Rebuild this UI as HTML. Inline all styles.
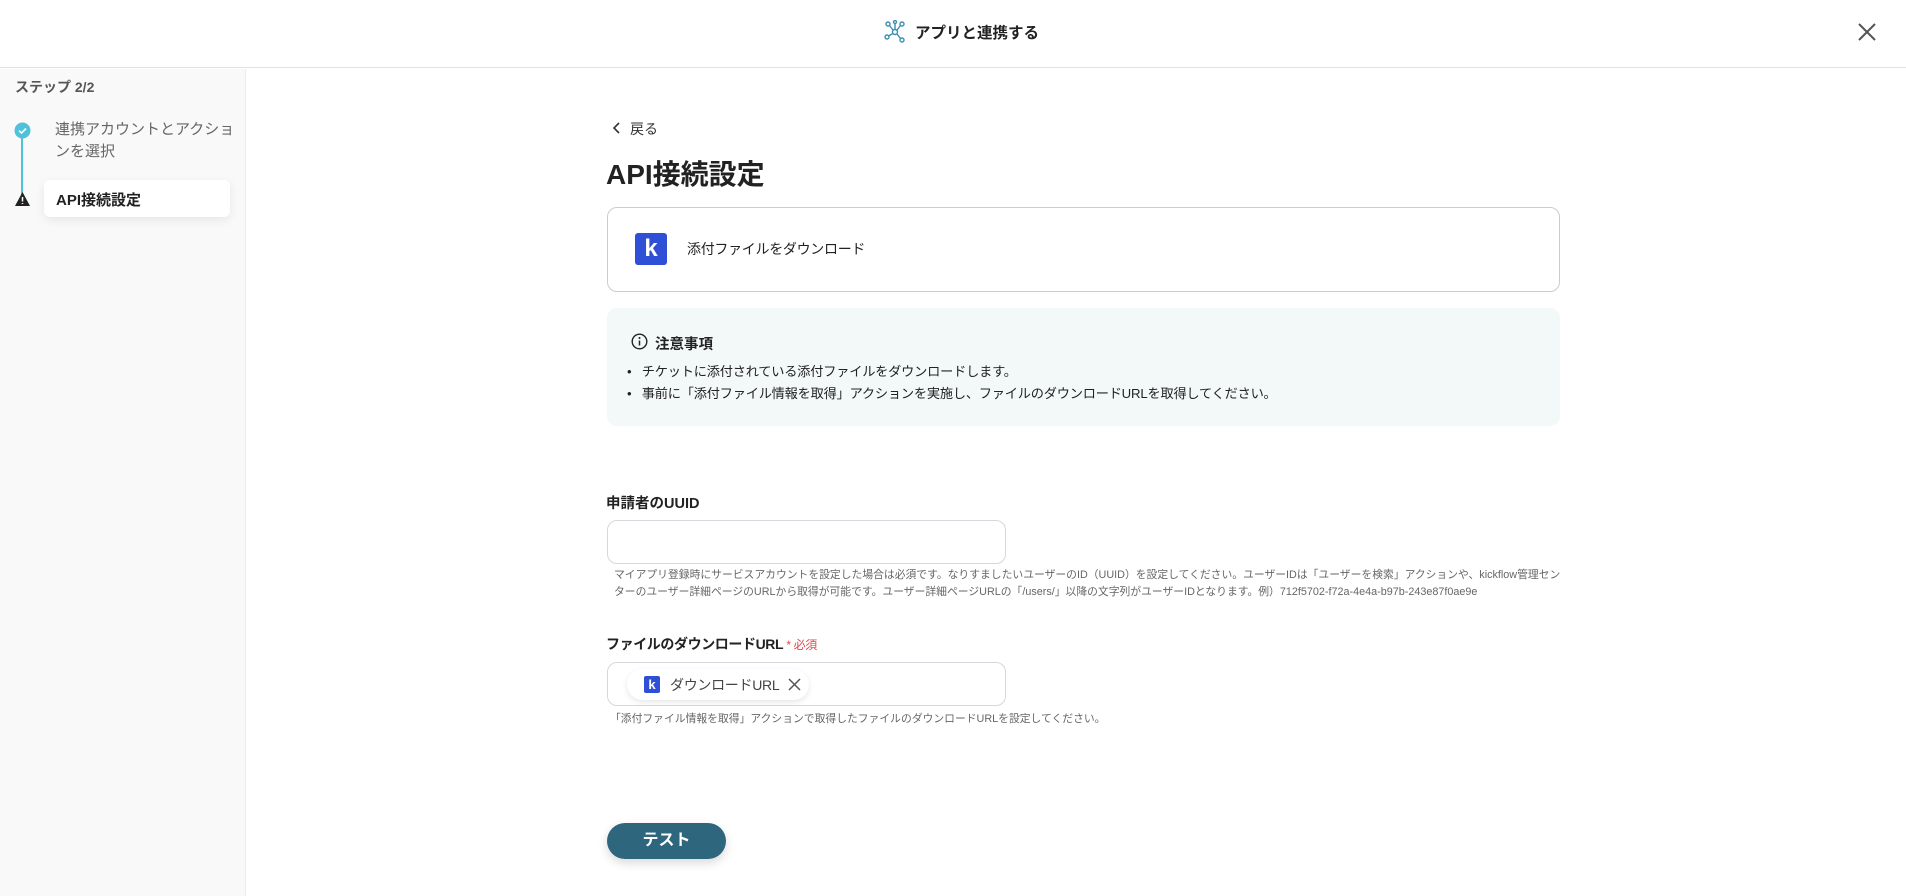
<!DOCTYPE html>
<html><head><meta charset="utf-8"><style>
*{margin:0;padding:0;box-sizing:border-box}
body{width:1906px;height:896px;overflow:hidden;background:#fff;font-family:"Liberation Sans","Noto Sans CJK JP",sans-serif;color:#222;position:relative}
.a{position:absolute;white-space:nowrap}
</style></head><body>
<div class="a" style="left:0;top:0;width:1906px;height:68px;border-bottom:1px solid #e2e2e2"></div>
<svg class="a" style="left:884px;top:20px" width="22" height="24" viewBox="0 0 22 24" fill="none" stroke="#3a8fb0" stroke-width="1.4"><circle cx="11" cy="12" r="2.5"/><circle cx="4" cy="4" r="2"/><circle cx="18" cy="4" r="2"/><circle cx="3" cy="17" r="2"/><circle cx="18" cy="20" r="2"/><circle cx="11" cy="2" r="1.5"/><path d="M5.5 5.5L9 10M16.5 5.5L13 10M4.5 16L9 13.5M16.5 18.5L13 14M11 3.5V9.5"/></svg>
<div class="a" style="left:915px;top:21px;font-size:15.5px;font-weight:bold">アプリと連携する</div>
<svg class="a" style="left:1857px;top:22px" width="20" height="20" viewBox="0 0 20 20" stroke="#555" stroke-width="2"><path d="M2 2L18 18M18 2L2 18"/></svg>

<div class="a" style="left:0;top:69px;width:246px;height:827px;background:#f9f9f9;border-right:1px solid #ececec"></div>
<div class="a" style="left:15px;top:77px;font-size:14px;color:#555;font-weight:bold">ステップ 2/2</div>
<div class="a" style="left:21px;top:138px;width:2px;height:60px;background:#4fc1d9"></div>
<svg class="a" style="left:14px;top:122px" width="17" height="17" viewBox="0 0 17 17"><circle cx="8.5" cy="8.5" r="8" fill="#4fc1d9"/><path d="M5 8.7L7.5 11L12 6.5" stroke="#fff" stroke-width="1.6" fill="none"/></svg>
<div class="a" style="left:55px;top:119px;font-size:15px;color:#666;line-height:22px">連携アカウントとアクショ<br>ンを選択</div>
<div class="a" style="left:44px;top:180px;width:186px;height:37px;background:#fff;border-radius:6px;box-shadow:0 3px 10px rgba(0,0,0,.08)"></div>
<svg class="a" style="left:14px;top:191px" width="17" height="16" viewBox="0 0 17 16"><path d="M8.5 1L16 15H1Z" fill="#222"/><path d="M8.5 6V10.5M8.5 12V13" stroke="#fff" stroke-width="1.5"/></svg>
<div class="a" style="left:56px;top:189px;font-size:15px;font-weight:bold">API接続設定</div>

<svg class="a" style="left:612px;top:121px" width="10" height="14" viewBox="0 0 10 14"><path d="M7 2L2 7L7 12" stroke="#333" stroke-width="1.6" fill="none"/></svg>
<div class="a" style="left:630px;top:119px;font-size:14px;color:#333">戻る</div>
<div class="a" style="left:606px;top:153px;font-size:28px;font-weight:bold">API接続設定</div>

<div class="a" style="left:607px;top:207px;width:953px;height:85px;border:1.5px solid #ccc;border-radius:10px"></div>
<div class="a" style="left:635px;top:233px;width:32px;height:32px;background:#2e4fd6;border-radius:3px;color:#fff;font-size:24px;font-weight:bold;text-align:center;line-height:32px">k</div>
<div class="a" style="left:687px;top:239px;font-size:14px;letter-spacing:-0.3px">添付ファイルをダウンロード</div>

<div class="a" style="left:607px;top:308px;width:953px;height:118px;background:#f3f9f9;border-radius:10px"></div>
<svg class="a" style="left:631px;top:333px" width="17" height="17" viewBox="0 0 17 17"><circle cx="8.5" cy="8.5" r="7.3" stroke="#222" stroke-width="1.4" fill="none"/><path d="M8.5 7.5V12.5" stroke="#222" stroke-width="1.5"/><circle cx="8.5" cy="5" r="1" fill="#222"/></svg>
<div class="a" style="left:655px;top:333px;font-size:14.5px;font-weight:bold">注意事項</div>
<div class="a" style="left:627px;top:361px;font-size:13.2px;line-height:22px;letter-spacing:-0.2px">• &nbsp;&nbsp;チケットに添付されている添付ファイルをダウンロードします。<br>• &nbsp;&nbsp;事前に「添付ファイル情報を取得」アクションを実施し、ファイルのダウンロードURLを取得してください。</div>

<div class="a" style="left:606px;top:492px;font-size:14.5px;font-weight:bold">申請者のUUID</div>
<div class="a" style="left:607px;top:520px;width:399px;height:44px;border:1.5px solid #d5d8dc;border-radius:10px"></div>
<div class="a" style="left:614px;top:567px;font-size:10.8px;color:#666;line-height:17px">マイアプリ登録時にサービスアカウントを設定した場合は必須です。なりすましたいユーザーのID（UUID）を設定してください。ユーザーIDは「ユーザーを検索」アクションや、kickflow管理セン<br>ターのユーザー詳細ページのURLから取得が可能です。ユーザー詳細ページURLの「/users/」以降の文字列がユーザーIDとなります。例）712f5702-f72a-4e4a-b97b-243e87f0ae9e</div>

<div class="a" style="left:606px;top:634px;font-size:14px;font-weight:bold;letter-spacing:-0.4px">ファイルのダウンロードURL <span style="color:#e5484d;font-size:12px;font-weight:normal">* 必須</span></div>
<div class="a" style="left:607px;top:662px;width:399px;height:44px;border:1.5px solid #d5d8dc;border-radius:10px"></div>
<div class="a" style="left:627px;top:669px;width:182px;height:31px;background:#fff;border-radius:16px;box-shadow:0 2px 6px rgba(0,0,0,.1)"></div>
<div class="a" style="left:644px;top:676px;width:16px;height:17px;background:#2e4fd6;border-radius:2px;color:#fff;font-size:13px;font-weight:bold;text-align:center;line-height:17px">k</div>
<div class="a" style="left:670px;top:675px;font-size:14px;color:#444;letter-spacing:-0.3px">ダウンロードURL</div>
<svg class="a" style="left:788px;top:678px" width="13" height="13" viewBox="0 0 13 13" stroke="#555" stroke-width="1.5"><path d="M1 1L12 12M12 1L1 12"/></svg>
<div class="a" style="left:610px;top:710px;font-size:10.8px;color:#666">「添付ファイル情報を取得」アクションで取得したファイルのダウンロードURLを設定してください。</div>

<div class="a" style="left:607px;top:823px;width:119px;height:36px;background:#2e667e;border-radius:18px;color:#fff;font-size:16px;font-weight:bold;text-align:center;line-height:36px;box-shadow:0 4px 10px rgba(0,0,0,.15)">テスト</div>
</body></html>
